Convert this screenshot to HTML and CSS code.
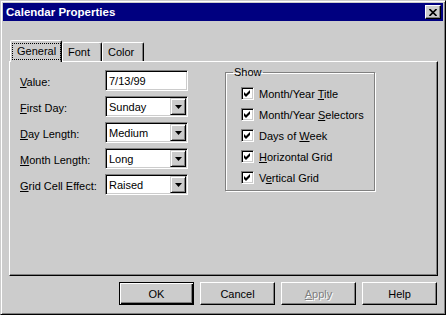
FILE: index.html
```html
<!DOCTYPE html>
<html lang="en">
<head>
    <meta charset="UTF-8">
    <title>Calendar Properties</title>
    <link rel="stylesheet" href="styles.css">
</head>
<body>

    <div class="window">
        <div class="titlebar">
            <span class="title">Calendar Properties</span>
            <span class="close-btn">
                <svg width="8" height="7" viewBox="0 0 8 7"><path d="M0.5 0 L7.5 7 M7.5 0 L0.5 7" stroke="#000" stroke-width="1.6"/></svg>
            </span>
        </div>

        <div class="tabs">
            <div class="tab active"><span class="focus">General</span></div>
            <div class="tab tab-font">Font</div>
            <div class="tab tab-color">Color</div>
        </div>

        <div class="panel">
            <div class="fields">
                <label class="field-label"><span><u>V</u>alue:</span></label>
                <div class="textbox">7/13/99</div>

                <label class="field-label"><span><u>F</u>irst Day:</span></label>
                <div class="combo"><span>Sunday</span><span class="combo-btn"><svg width="7" height="4"><polygon points="0,0 7,0 3.5,4" fill="#000"/></svg></span></div>

                <label class="field-label"><span><u>D</u>ay Length:</span></label>
                <div class="combo"><span>Medium</span><span class="combo-btn"><svg width="7" height="4"><polygon points="0,0 7,0 3.5,4" fill="#000"/></svg></span></div>

                <label class="field-label"><span><u>M</u>onth Length:</span></label>
                <div class="combo"><span>Long</span><span class="combo-btn"><svg width="7" height="4"><polygon points="0,0 7,0 3.5,4" fill="#000"/></svg></span></div>

                <label class="field-label"><span><u>G</u>rid Cell Effect:</span></label>
                <div class="combo"><span>Raised</span><span class="combo-btn"><svg width="7" height="4"><polygon points="0,0 7,0 3.5,4" fill="#000"/></svg></span></div>
            </div>

            <fieldset class="group">
                <legend>Show</legend>
                <div class="check-row"><span class="checkbox"><svg width="9" height="9"><polygon points="1,3 3,5 7,1 7,4 3,8 1,6" fill="#000"/></svg></span><span>Month/Year <u>T</u>itle</span></div>
                <div class="check-row"><span class="checkbox"><svg width="9" height="9"><polygon points="1,3 3,5 7,1 7,4 3,8 1,6" fill="#000"/></svg></span><span>Month/Year <u>S</u>electors</span></div>
                <div class="check-row"><span class="checkbox"><svg width="9" height="9"><polygon points="1,3 3,5 7,1 7,4 3,8 1,6" fill="#000"/></svg></span><span>Days of <u>W</u>eek</span></div>
                <div class="check-row"><span class="checkbox"><svg width="9" height="9"><polygon points="1,3 3,5 7,1 7,4 3,8 1,6" fill="#000"/></svg></span><span><u>H</u>orizontal Grid</span></div>
                <div class="check-row"><span class="checkbox"><svg width="9" height="9"><polygon points="1,3 3,5 7,1 7,4 3,8 1,6" fill="#000"/></svg></span><span>V<u>e</u>rtical Grid</span></div>
            </fieldset>
        </div>

        <div class="buttons">
            <div class="btn default">OK</div>
            <div class="btn">Cancel</div>
            <div class="btn disabled"><span><u>A</u>pply</span></div>
            <div class="btn">Help</div>
        </div>
    </div>

</body>
</html>
```

FILE: styles.css
```css
/* janela estilo Windows 95 */
body { margin: 0; font-family: "Liberation Sans", Arial, sans-serif; font-size: 11px; color: #000; background: #ccc; }
u { text-underline-offset: 1px; }

.window { width: 446px; height: 315px; box-sizing: border-box; background: #ccc; border: 1px solid; border-color: #ccc #000 #000 #ccc; box-shadow: inset 1px 1px #fff, inset -1px -1px #808080; padding: 2px; display: flex; flex-direction: column; }

.titlebar { height: 18px; background: #000080; color: #fff; display: flex; align-items: center; justify-content: space-between; padding: 0 2px 0 3px; }
.title { font-weight: bold; font-size: 11.5px; }
.close-btn { width: 16px; height: 14px; box-sizing: border-box; background: #ccc; border: 1px solid; border-color: #fff #000 #000 #fff; box-shadow: inset -1px -1px #808080; display: flex; align-items: center; justify-content: center; }

.tabs { display: flex; align-items: flex-end; margin: 19px 0 0 7px; height: 21px; }
.tab { box-sizing: border-box; height: 19px; border: 1px solid; border-color: #fff #000 transparent #fff; border-bottom: none; border-radius: 2px 2px 0 0; box-shadow: inset -1px 0 #808080; display: flex; align-items: center; padding-left: 5px; }
.tab.active { height: 22px; width: 52px; margin-bottom: -1px; background: #ccc; position: relative; z-index: 1; padding: 0 2px; }
.tab-font { width: 40px; }
.tab-color { width: 42px; margin-left: 0; }
.focus { outline: 1px dotted #000; padding: 1px 4px 2px 4px; margin-top: -1px; }

.panel { width: 429px; height: 215px; box-sizing: border-box; margin-left: 6px; border: 1px solid; border-color: #fff #000 #000 #fff; box-shadow: inset -1px -1px #808080; padding: 4px 0 0 10px; display: flex; align-items: flex-start; }

.fields { display: grid; grid-template-columns: 85px 83px; grid-auto-rows: 21px; row-gap: 5px; margin-top: 4px; }
.field-label { display: flex; align-items: center; padding-top: 3px; }
.textbox, .combo { box-sizing: border-box; height: 21px; background: #fff; border: 1px solid; border-color: #808080 #fff #fff #808080; box-shadow: inset 1px 1px #000, inset -1px -1px #ccc; padding-left: 3px; display: flex; align-items: center; }
.combo { justify-content: space-between; padding-right: 1px; }
.combo-btn { width: 16px; height: 17px; box-sizing: border-box; background: #ccc; border: 1px solid; border-color: #ccc #000 #000 #ccc; box-shadow: inset 1px 1px #fff, inset -1px -1px #808080; display: flex; align-items: center; justify-content: center; }

.group { margin: 0 0 0 37px; width: 150px; box-sizing: border-box; border: 1px solid #808080; box-shadow: inset 1px 1px #fff, 1px 1px #fff; padding: 4px 0 2px 7px; }
.group legend { padding: 0 1px; line-height: 13px; }
.check-row { height: 21px; display: flex; align-items: center; margin-left: 8px; }
.checkbox { width: 13px; height: 13px; box-sizing: border-box; background: #fff; border: 1px solid; border-color: #808080 #fff #fff #808080; box-shadow: inset 1px 1px #000, inset -1px -1px #ccc; margin-right: 5px; display: flex; align-items: center; justify-content: center; }

.buttons { display: flex; justify-content: flex-end; gap: 6px; margin: 6px 6px 0 0; }
.btn { width: 75px; height: 23px; box-sizing: border-box; border: 1px solid; border-color: #fff #000 #000 #fff; box-shadow: inset -1px -1px #808080; display: flex; align-items: center; justify-content: center; }
.btn.default { border: 1px solid #000; box-shadow: inset 1px 1px #fff, inset -1px -1px #000, inset -2px -2px #808080; }
.btn.disabled { color: #808080; text-shadow: 1px 1px #fff; }
```
